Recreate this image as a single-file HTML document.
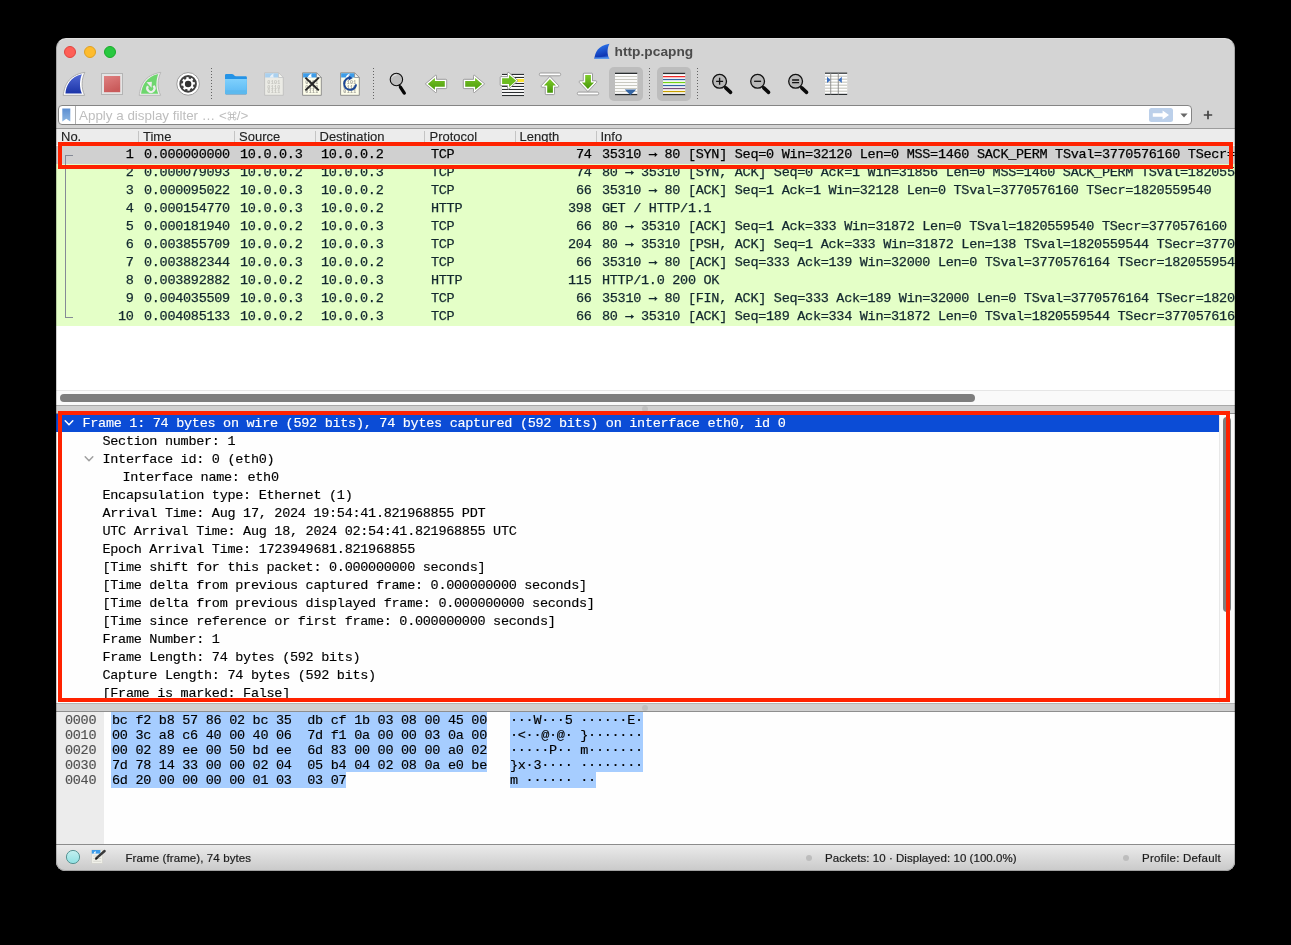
<!DOCTYPE html>
<html><head><meta charset="utf-8"><title>http.pcapng</title>
<style>
*{box-sizing:border-box;margin:0;padding:0}
html,body{width:1291px;height:945px;background:#000;overflow:hidden}
body{position:relative;font-family:"Liberation Sans",sans-serif;color:#000}
#win{will-change:transform;position:absolute;left:56px;top:38px;width:1179px;height:832.6px;background:#d4d4d4;border-radius:10px 10px 9px 9px;overflow:hidden}
.abs{position:absolute}
.mono{font-family:"Liberation Mono",monospace;font-size:13.5px;letter-spacing:-0.29px;white-space:pre;-webkit-text-stroke:0.15px}
.tl{position:absolute;top:8px;width:12px;height:12px;border-radius:50%}
#title{position:absolute;top:6.2px;left:558.5px;height:16px;font-weight:bold;font-size:13.7px;letter-spacing:0.04px;line-height:16px;color:#4b4b4b;white-space:nowrap}
.tbsep{position:absolute;top:30px;width:1px;height:31px;background:repeating-linear-gradient(#636363 0,#636363 1px,transparent 1px,transparent 3px)}
.tbact{position:absolute;top:29px;width:34px;height:34px;background:#bdbdbd;border-radius:5px}
.ic{position:absolute;top:33px;width:26px;height:26px}
#filter{position:absolute;left:2px;top:67px;width:1134px;height:20px;background:#fff;border:1px solid #858585;border-radius:4px}
#hdr{position:absolute;left:0;top:90px;width:1179px;height:18px;background:#ececec;border-top:1px solid #9c9c9c}
#hdr span{position:absolute;top:0;font-size:13px;line-height:16px;color:#222;-webkit-text-stroke:0.12px}
#hdr i{position:absolute;top:2px;width:1px;height:13px;background:#c4c4c4}
#plist{position:absolute;left:0;top:107px;width:1179px;height:245px;background:#fff;overflow:hidden}
.pr{position:absolute;left:0;width:1179px;height:18px;background:#e4ffc7;color:#12272e}
.pr span{position:absolute;top:-0.4px;line-height:18px;-webkit-text-stroke:0.25px}
.pr b{position:relative;top:-0.5px;font-weight:normal;-webkit-text-stroke:0.6px}
.pr.sel{background:#d0d0d0;color:#000}
#hsb{position:absolute;left:0;top:352px;width:1179px;height:15px;background:#fafafa;border-top:1px solid #e6e6e6}
#hsb div{position:absolute;left:4px;top:3px;width:915px;height:8px;border-radius:4px;background:#7e7e7e}
.split{position:absolute;left:0;width:1179px;background:#d0d0d0}
#det{position:absolute;left:0;top:375px;width:1179px;height:290px;background:#fefefe;overflow:hidden;border-top:1px solid #8e8e8e}
.dr{position:absolute;left:0;width:1163px;height:18px;line-height:18px}
.dr span{position:absolute;top:0.6px}
.dr.sel{background:#0b4cd6;color:#fff}
#vsb{position:absolute;left:1163px;top:0;width:16px;height:289px;background:#fafafa;border-left:1px solid #e8e8e8}
#vsb div{position:absolute;left:3px;top:3px;width:7.5px;height:195px;border-radius:4px;background:#7e7e7e}
#bytes{position:absolute;left:0;top:674px;width:1179px;height:132px;background:#fefefe;overflow:hidden}
#boff{position:absolute;left:0;top:0;width:48px;height:132px;background:#ececec}
.br{position:absolute;left:0;height:15px;line-height:18px}
.br span{position:absolute;top:0;height:15px}
.hl{background:#a6cdff}
#status{position:absolute;left:0;top:806px;width:1179px;height:27px;border-top:1px solid #8c8c8c;background:linear-gradient(#ebebeb,#c9c9c9);font-size:11.5px;color:#1c1c1c}
#status span{-webkit-text-stroke:0.2px;position:absolute;top:6.2px;line-height:15px;white-space:nowrap}
.redbox{position:absolute;border:4px solid #ff2200;pointer-events:none}
</style></head><body>
<div id="win">

<div class="tl" style="left:8px;background:#fe5f57;border:0.5px solid #e0443e"></div>
<div class="tl" style="left:28px;background:#febc2e;border:0.5px solid #dea123"></div>
<div class="tl" style="left:48px;background:#28c840;border:0.5px solid #1aab29"></div>
<svg class="abs" style="left:538px;top:5px" width="16" height="16" viewBox="0 0 16 16" ><g transform="translate(-1.2,-0.2) scale(0.70,0.655)"><path d="M2.2,24.3 C3.5,15 7,4 23.8,1.4 C20.5,8 20,17 23.6,24.3 Z" fill="url(#gFinT)"/><path d="M2.2,24.3 L23.6,24.3 L23.0,22.4 L2.6,22.4 Z" fill="#5e9ff0"/></g></svg>
<div id="title">http.pcapng</div>
<svg width="0" height="0" style="position:absolute"><defs>
<linearGradient id="gBlue" x1="0" y1="0" x2="0" y2="1"><stop offset="0" stop-color="#5068d4"/><stop offset="1" stop-color="#1b34a8"/></linearGradient>
<linearGradient id="gFinT" x1="0.2" y1="0" x2="0.5" y2="1"><stop offset="0" stop-color="#2e7cf2"/><stop offset="0.85" stop-color="#0f36b4"/><stop offset="1" stop-color="#2c66d8"/></linearGradient>
<linearGradient id="gRed" x1="0" y1="0" x2="0.4" y2="1"><stop offset="0" stop-color="#df8080"/><stop offset="1" stop-color="#c95a5a"/></linearGradient>
<linearGradient id="gGrn" x1="0" y1="0" x2="0" y2="1"><stop offset="0" stop-color="#7fcc2a"/><stop offset="1" stop-color="#46960a"/></linearGradient>
<linearGradient id="gGrnH" x1="0" y1="0" x2="0" y2="1"><stop offset="0" stop-color="#74c024"/><stop offset="1" stop-color="#4c9c0c"/></linearGradient>
<linearGradient id="gFold" x1="0" y1="0" x2="0" y2="1"><stop offset="0" stop-color="#7fd0fc"/><stop offset="1" stop-color="#5ab8f4"/></linearGradient>
<linearGradient id="gBm" x1="0" y1="0" x2="0" y2="1"><stop offset="0" stop-color="#5b8ed2"/><stop offset="1" stop-color="#8cb6e2"/></linearGradient>
<linearGradient id="gCy" x1="0" y1="0" x2="0" y2="1"><stop offset="0" stop-color="#c4f0f0"/><stop offset="1" stop-color="#8fe0e2"/></linearGradient>
</defs></svg><div class="tbact" style="left:553px"></div><div class="tbact" style="left:601px"></div><div class="tbsep" style="left:155px"></div><div class="tbsep" style="left:317px"></div><div class="tbsep" style="left:593px"></div><div class="tbsep" style="left:641px"></div><svg class="abs" style="left:5px;top:33px" width="26" height="26" viewBox="0 0 26 26" ><path d="M2.2,24.3 C3.5,15 7,4 23.8,1.4 C20.5,8 20,17 23.6,24.3 Z" fill="#fff" stroke="#a4a4a4" stroke-width="0.9" stroke-linejoin="round"/><path d="M4.4,22.5 C5.2,14.5 9,6.2 20.9,3.3 C18.6,9 18.2,16.5 20.9,22.5 Z" fill="url(#gBlue)"/></svg><svg class="abs" style="left:43px;top:33px" width="26" height="26" viewBox="0 0 26 26" ><rect x="2.5" y="2.5" width="21" height="21" fill="#e4e4e4" stroke="#b4b4b4" stroke-width="1"/><rect x="5" y="5" width="16.2" height="16.2" fill="url(#gRed)"/></svg><svg class="abs" style="left:81px;top:33px" width="26" height="26" viewBox="0 0 26 26" ><path d="M2.2,24.3 C3.5,15 7,4 23.8,1.4 C20.5,8 20,17 23.6,24.3 Z" fill="#f0f0f0" stroke="#b2b2b2" stroke-width="0.9" stroke-linejoin="round"/><path d="M4.1,22.8 C5,14.5 8.8,5.8 21.3,2.9 C19,9 18.6,16.5 21.3,22.8 Z" fill="#6ed66e"/><path d="M16.45,14.75 A3.6,3.6 0 1 1 10.95,15.24" fill="none" stroke="#ececec" stroke-width="2.2"/><path d="M9.5,11.3 L14.9,10.65 L14.56,16.7 Z" fill="#ececec"/></svg><svg class="abs" style="left:119px;top:33px" width="26" height="26" viewBox="0 0 26 26" ><circle cx="13.1" cy="12.9" r="11.3" fill="#fff" stroke="#949494" stroke-width="0.9"/><circle cx="13.1" cy="12.9" r="8.8" fill="#414141"/><circle cx="13.1" cy="12.9" r="5.3" fill="#fff"/><rect x="4.4" y="-1.2" width="2.4" height="2.4" rx="0.4" fill="#fff" transform="translate(13.1,12.9) rotate(-6)"/><rect x="4.4" y="-1.2" width="2.4" height="2.4" rx="0.4" fill="#fff" transform="translate(13.1,12.9) rotate(39)"/><rect x="4.4" y="-1.2" width="2.4" height="2.4" rx="0.4" fill="#fff" transform="translate(13.1,12.9) rotate(84)"/><rect x="4.4" y="-1.2" width="2.4" height="2.4" rx="0.4" fill="#fff" transform="translate(13.1,12.9) rotate(129)"/><rect x="4.4" y="-1.2" width="2.4" height="2.4" rx="0.4" fill="#fff" transform="translate(13.1,12.9) rotate(174)"/><rect x="4.4" y="-1.2" width="2.4" height="2.4" rx="0.4" fill="#fff" transform="translate(13.1,12.9) rotate(219)"/><rect x="4.4" y="-1.2" width="2.4" height="2.4" rx="0.4" fill="#fff" transform="translate(13.1,12.9) rotate(264)"/><rect x="4.4" y="-1.2" width="2.4" height="2.4" rx="0.4" fill="#fff" transform="translate(13.1,12.9) rotate(309)"/><circle cx="13.1" cy="12.9" r="3.25" fill="#333"/></svg><svg class="abs" style="left:167px;top:33px" width="26" height="26" viewBox="0 0 26 26" ><path d="M2,4.2 Q2,3 3.2,3 L9,3 Q9.8,3 10.4,3.6 L11.6,4.8 Q12,5.2 12.8,5.2 L22.7,5.2 Q23.9,5.2 23.9,6.4 L23.9,22 Q23.9,23.2 22.7,23.2 L3.2,23.2 Q2,23.2 2,22 Z" fill="#2493e6"/><path d="M2,8 L23.9,8 L23.9,22 Q23.9,23.2 22.7,23.2 L3.2,23.2 Q2,23.2 2,22 Z" fill="url(#gFold)"/><path d="M2,19.2 L23.9,19.2 L23.9,22 Q23.9,23.2 22.7,23.2 L3.2,23.2 Q2,23.2 2,22 Z" fill="#5cb9ee"/><rect x="2.6" y="23.2" width="20.8" height="0.6" fill="#9a9a9a" opacity="0.5"/></svg><svg class="abs" style="left:205px;top:33px" width="26" height="26" viewBox="0 0 26 26" ><path d="M3.6,1.8 L17.6,1.8 L22.3,6.5 L22.3,24.3 L3.6,24.3 Z" fill="#ebebe5" stroke="#c0c0c0" stroke-width="0.9"/><path d="M4.1,2.3 L17.4,2.3 L21.8,6.4 L4.1,6.4 Z" fill="#a9d0ef"/><path d="M8.6,6.4 C9.4,4.6 10.6,3.3 12.8,2.5 C12.1,3.9 12.1,5.2 12.9,6.4 Z" fill="#e6f0f8"/><path d="M17.6,1.8 L17.6,6.5 L22.3,6.5 Z" fill="#f6f6f0" stroke="#c0c0c0" stroke-width="0.7" stroke-linejoin="round"/><text x="13" y="13.4" font-family="Liberation Mono,monospace" font-size="5" font-weight="bold" text-anchor="middle" fill="#c4c4be" letter-spacing="0.35">0101</text><text x="13" y="17.8" font-family="Liberation Mono,monospace" font-size="5" font-weight="bold" text-anchor="middle" fill="#c4c4be" letter-spacing="0.35">0110</text><text x="13" y="22.2" font-family="Liberation Mono,monospace" font-size="5" font-weight="bold" text-anchor="middle" fill="#c4c4be" letter-spacing="0.35">0111</text></svg><svg class="abs" style="left:243px;top:33px" width="26" height="26" viewBox="0 0 26 26" ><path d="M3.6,1.8 L17.6,1.8 L22.3,6.5 L22.3,24.3 L3.6,24.3 Z" fill="#fdfdea" stroke="#868686" stroke-width="0.9"/><path d="M4.1,2.3 L17.4,2.3 L21.8,6.4 L4.1,6.4 Z" fill="#3d9ce9"/><path d="M8.6,6.4 C9.4,4.6 10.6,3.3 12.8,2.5 C12.1,3.9 12.1,5.2 12.9,6.4 Z" fill="#ffffff"/><path d="M17.6,1.8 L17.6,6.5 L22.3,6.5 Z" fill="#f6f6f0" stroke="#868686" stroke-width="0.7" stroke-linejoin="round"/><text x="13" y="13.4" font-family="Liberation Mono,monospace" font-size="5" font-weight="bold" text-anchor="middle" fill="#a2a29a" letter-spacing="0.35">0101</text><text x="13" y="17.8" font-family="Liberation Mono,monospace" font-size="5" font-weight="bold" text-anchor="middle" fill="#a2a29a" letter-spacing="0.35">0110</text><text x="13" y="22.2" font-family="Liberation Mono,monospace" font-size="5" font-weight="bold" text-anchor="middle" fill="#a2a29a" letter-spacing="0.35">0111</text><path d="M6.4,6.6 L19.8,19.4 M19.8,6.6 L6.4,19.4" stroke="#262626" stroke-width="2" stroke-linecap="butt"/></svg><svg class="abs" style="left:281px;top:33px" width="26" height="26" viewBox="0 0 26 26" ><path d="M3.6,1.8 L17.6,1.8 L22.3,6.5 L22.3,24.3 L3.6,24.3 Z" fill="#fdfdea" stroke="#868686" stroke-width="0.9"/><path d="M4.1,2.3 L17.4,2.3 L21.8,6.4 L4.1,6.4 Z" fill="#3d9ce9"/><path d="M8.6,6.4 C9.4,4.6 10.6,3.3 12.8,2.5 C12.1,3.9 12.1,5.2 12.9,6.4 Z" fill="#ffffff"/><path d="M17.6,1.8 L17.6,6.5 L22.3,6.5 Z" fill="#f6f6f0" stroke="#868686" stroke-width="0.7" stroke-linejoin="round"/><text x="13" y="13.4" font-family="Liberation Mono,monospace" font-size="5" font-weight="bold" text-anchor="middle" fill="#a2a29a" letter-spacing="0.35">0101</text><text x="13" y="17.8" font-family="Liberation Mono,monospace" font-size="5" font-weight="bold" text-anchor="middle" fill="#a2a29a" letter-spacing="0.35">0110</text><text x="13" y="22.2" font-family="Liberation Mono,monospace" font-size="5" font-weight="bold" text-anchor="middle" fill="#a2a29a" letter-spacing="0.35">0111</text><path d="M19.1,13.4 A6,6 0 1 1 13.1,6.8" fill="none" stroke="#1b4797" stroke-width="2"/><path d="M11.6,4.4 L15.8,6.9 L11.6,9.4 Z" fill="#1b4797"/></svg><svg class="abs" style="left:328px;top:33px" width="26" height="26" viewBox="0 0 26 26" ><circle cx="12.4" cy="8.5" r="6.2" fill="#bdbdbd" stroke="#0c0c0c" stroke-width="1.1"/><path d="M8,6.6 A4.8,4.8 0 0 1 12.6,3.8" fill="none" stroke="#ececec" stroke-width="0.9"/><path d="M16.4,16.2 L20.3,22.1" stroke="#050505" stroke-width="3.3" stroke-linecap="round"/><path d="M15,13.6 L16.6,16.2" stroke="#0c0c0c" stroke-width="1.8"/></svg><svg class="abs" style="left:367px;top:33px" width="26" height="26" viewBox="0 0 26 26" ><g><path d="M2.3,12.9 L12.5,4.3 Q13.5,3.8 13.5,5.2 L13.5,8.3 L22.9,8.3 Q23.7,8.3 23.7,9.1 L23.7,16.8 Q23.7,17.6 22.9,17.6 L13.5,17.6 L13.5,20.6 Q13.5,22 12.5,21.5 Z" fill="#fff" stroke="#939393" stroke-width="0.9" stroke-linejoin="round"/><polygon points="4.8,12.9 11.9,7.1 11.9,10 21.8,10 21.8,15.7 11.9,15.7 11.9,18.8" fill="url(#gGrnH)"/></g></svg><svg class="abs" style="left:405px;top:33px" width="26" height="26" viewBox="0 0 26 26" ><g transform="translate(26,0) scale(-1,1)"><path d="M2.3,12.9 L12.5,4.3 Q13.5,3.8 13.5,5.2 L13.5,8.3 L22.9,8.3 Q23.7,8.3 23.7,9.1 L23.7,16.8 Q23.7,17.6 22.9,17.6 L13.5,17.6 L13.5,20.6 Q13.5,22 12.5,21.5 Z" fill="#fff" stroke="#939393" stroke-width="0.9" stroke-linejoin="round"/><polygon points="4.8,12.9 11.9,7.1 11.9,10 21.8,10 21.8,15.7 11.9,15.7 11.9,18.8" fill="url(#gGrnH)"/></g></svg><svg class="abs" style="left:443px;top:33px" width="26" height="26" viewBox="0 0 26 26" ><rect x="3" y="3" width="22" height="22" fill="#fff"/><rect x="3" y="2.9" width="22" height="1.1" fill="#2a2e30"/><rect x="3" y="5.9" width="22" height="1.1" fill="#2a2e30"/><rect x="3" y="11.95" width="22" height="1.1" fill="#2a2e30"/><rect x="3" y="14.9" width="22" height="1.1" fill="#2a2e30"/><rect x="3" y="17.95" width="22" height="1.1" fill="#2a2e30"/><rect x="3" y="20.95" width="22" height="1.1" fill="#2a2e30"/><rect x="3" y="23.95" width="22" height="1.1" fill="#2a2e30"/><rect x="17" y="7.95" width="8" height="3" fill="#fbe132"/><path d="M1.2,6.4 Q1.2,5.6 2,5.6 L8.5,5.6 L8.5,2.2 Q8.6,0.8 9.9,1.5 L18.9,9.7 L9.9,17.9 Q8.6,18.6 8.5,17.2 L8.5,14.6 L2,14.6 Q1.2,14.6 1.2,13.8 Z" fill="#fff" stroke="#939393" stroke-width="0.9" stroke-linejoin="round"/><polygon points="3.1,7.2 9.9,7.2 10.2,3.9 17.2,9.7 10.2,16 9.9,12.9 3.1,12.9" fill="#6cbc20"/></svg><svg class="abs" style="left:481px;top:33px" width="26" height="26" viewBox="0 0 26 26" ><rect x="2.3" y="2" width="21.4" height="2.8" rx="1.4" fill="#fff" stroke="#939393" stroke-width="0.9"/><path d="M12.9,5.4 L21.6,14.6 Q22.2,15.6 21,16.2 L17.5,16.2 L17.5,22.8 Q17.5,23.6 16.7,23.6 L9.1,23.6 Q8.3,23.6 8.3,22.8 L8.3,16.2 L4.9,16.2 Q3.7,15.6 4.3,14.6 Z" fill="#fff" stroke="#939393" stroke-width="0.9" stroke-linejoin="round"/><polygon points="12.9,7.9 18.9,14.6 15.9,14.6 15.9,21.7 10.2,21.7 10.2,14.6 6.95,14.6" fill="url(#gGrn)"/></svg><svg class="abs" style="left:519px;top:33px" width="26" height="26" viewBox="0 0 26 26" ><path d="M9.1,2.2 L16.7,2.2 Q17.5,2.2 17.5,3 L17.5,9.8 L21,9.8 Q22.2,10.4 21.6,11.4 L12.9,20.6 L4.3,11.4 Q3.7,10.4 4.9,9.8 L8.3,9.8 L8.3,3 Q8.3,2.2 9.1,2.2 Z" fill="#fff" stroke="#939393" stroke-width="0.9" stroke-linejoin="round"/><polygon points="10.2,4.1 15.9,4.1 15.9,11.4 19.1,11.4 12.9,17.9 6.9,11.4 10.2,11.4" fill="url(#gGrn)"/><rect x="2.3" y="21.1" width="21.4" height="2.8" rx="1.4" fill="#fff" stroke="#939393" stroke-width="0.9"/></svg><svg class="abs" style="left:557px;top:33px" width="26" height="26" viewBox="0 0 26 26" ><rect x="2" y="2" width="22.3" height="22" fill="#fff"/><rect x="2" y="4.9" width="22.3" height="1.2" fill="#c9c9c1"/><rect x="2" y="7.9" width="22.3" height="1.2" fill="#c9c9c1"/><rect x="2" y="10.9" width="22.3" height="1.2" fill="#c9c9c1"/><rect x="2" y="13.9" width="22.3" height="1.2" fill="#c9c9c1"/><rect x="2" y="16.9" width="22.3" height="1.2" fill="#c9c9c1"/><rect x="2" y="19.9" width="22.3" height="1.2" fill="#c9c9c1"/><rect x="2" y="1.7" width="22.3" height="1.3" fill="#2a2e30"/><rect x="2" y="22.9" width="22.3" height="1.3" fill="#2a2e30"/><path d="M11.8,18.4 L23.2,18.4 Q21,21 17.5,24 Q14,21 11.8,18.4 Z" fill="#3465a4"/></svg><svg class="abs" style="left:605px;top:33px" width="26" height="26" viewBox="0 0 26 26" ><rect x="2" y="2" width="22.2" height="22" fill="#fff"/><rect x="2" y="1.7999999999999998" width="22.2" height="1.3" fill="#2a2e30"/><rect x="2" y="5.0" width="22.2" height="1.3" fill="#ee2a2a"/><rect x="2" y="7.9" width="22.2" height="1.3" fill="#3465a4"/><rect x="2" y="10.9" width="22.2" height="1.3" fill="#73d216"/><rect x="2" y="13.9" width="22.2" height="1.3" fill="#3465a4"/><rect x="2" y="16.9" width="22.2" height="1.3" fill="#75507b"/><rect x="2" y="19.9" width="22.2" height="1.3" fill="#c8a000"/><rect x="2" y="22.9" width="22.2" height="1.3" fill="#2a2e30"/></svg><svg class="abs" style="left:653px;top:33px" width="26" height="26" viewBox="0 0 26 26" ><circle cx="10.6" cy="10.3" r="6.9" fill="#b9b9b9" stroke="#111" stroke-width="1.3"/><path d="M16.8,16.9 L21.6,21.4" stroke="#0a0a0a" stroke-width="3.5" stroke-linecap="round"/><path d="M15.2,15.2 L17,17" stroke="#111" stroke-width="1.8"/><path d="M7.1,10.3 L14.1,10.3 M10.6,6.8 L10.6,13.8" stroke="#111" stroke-width="1.3"/></svg><svg class="abs" style="left:691px;top:33px" width="26" height="26" viewBox="0 0 26 26" ><circle cx="10.6" cy="10.3" r="6.9" fill="#b9b9b9" stroke="#111" stroke-width="1.3"/><path d="M16.8,16.9 L21.6,21.4" stroke="#0a0a0a" stroke-width="3.5" stroke-linecap="round"/><path d="M15.2,15.2 L17,17" stroke="#111" stroke-width="1.8"/><path d="M7.1,10.3 L14.1,10.3" stroke="#111" stroke-width="1.3"/></svg><svg class="abs" style="left:729px;top:33px" width="26" height="26" viewBox="0 0 26 26" ><circle cx="10.6" cy="10.3" r="6.9" fill="#b9b9b9" stroke="#111" stroke-width="1.3"/><path d="M16.8,16.9 L21.6,21.4" stroke="#0a0a0a" stroke-width="3.5" stroke-linecap="round"/><path d="M15.2,15.2 L17,17" stroke="#111" stroke-width="1.8"/><path d="M7.1,9 L14.1,9 M7.1,11.6 L14.1,11.6" stroke="#111" stroke-width="1.3"/></svg><svg class="abs" style="left:767px;top:33px" width="26" height="26" viewBox="0 0 26 26" ><rect x="2" y="2" width="22.2" height="21.6" fill="#fff"/><rect x="2" y="4.6000000000000005" width="22.2" height="1.2" fill="#c9c9c1"/><rect x="2" y="7.6" width="22.2" height="1.2" fill="#c9c9c1"/><rect x="2" y="10.6" width="22.2" height="1.2" fill="#c9c9c1"/><rect x="2" y="13.6" width="22.2" height="1.2" fill="#c9c9c1"/><rect x="2" y="16.599999999999998" width="22.2" height="1.2" fill="#c9c9c1"/><rect x="2" y="19.599999999999998" width="22.2" height="1.2" fill="#c9c9c1"/><rect x="2" y="1.6" width="22.2" height="1.2" fill="#2a2e30"/><rect x="2" y="22.8" width="22.2" height="1.2" fill="#2a2e30"/><rect x="7.3" y="2" width="0.9" height="21.6" fill="#888"/><rect x="14.8" y="2" width="0.9" height="21.6" fill="#888"/><polygon points="4,5.8 7.6,8.9 4,12" fill="#3a6fc0"/><polygon points="18.8,5.8 15.2,8.9 18.8,12" fill="#3a6fc0"/></svg>
<div id="filter"><svg class="abs" style="left:3px;top:2px" width="9" height="14" viewBox="0 0 9 14"><path d="M0.3,0.5 L8.3,0.5 L8.3,13.6 L4.3,10.8 L0.3,13.6 Z" fill="url(#gBm)"/></svg><div class="abs" style="left:16px;top:0;width:1px;height:18px;background:#b0b0b0"></div><div class="abs" style="left:20px;top:1.4px;height:18px;line-height:18px;font-size:13.4px;color:#bebebe;white-space:nowrap">Apply a display filter … &lt;<svg width="10" height="10" viewBox="0 0 10 10" style="vertical-align:-1px;margin:0 0"><path d="M3.5,3.5 V2.25 A1.25,1.25 0 1 0 2.25,3.5 H7.75 A1.25,1.25 0 1 0 6.5,2.25 V7.75 A1.25,1.25 0 1 0 7.75,6.5 H2.25 A1.25,1.25 0 1 0 3.5,7.75 Z" fill="none" stroke="#bebebe" stroke-width="0.95"/></svg>/&gt;</div><div class="abs" style="left:1090px;top:2px;width:24px;height:14px;border-radius:2.5px;background:#bcd0ea"></div><svg class="abs" style="left:1093px;top:4px" width="18" height="10" viewBox="0 0 18 10"><path d="M0.8,3.2 L10.6,3.2 L10.6,0.6 L17,5 L10.6,9.4 L10.6,6.8 L0.8,6.8 Z" fill="#fff"/></svg><svg class="abs" style="left:1121px;top:6.6px" width="8" height="5" viewBox="0 0 8 5"><path d="M0.4,0.4 L7.6,0.4 L4,4.6 Z" fill="#686868"/></svg></div>
<svg class="abs" style="left:1147px;top:72px" width="10" height="10" viewBox="0 0 10 10" ><path d="M0.8,5 L9.2,5 M5,0.8 L5,9.2" stroke="#444" stroke-width="1.7"/></svg>
<div id="hdr">
<span style="left:5px">No.</span>
<span style="left:87px">Time</span>
<span style="left:183px">Source</span>
<span style="left:263.5px">Destination</span>
<span style="left:373.5px">Protocol</span>
<span style="left:463.5px">Length</span>
<span style="left:544.5px">Info</span>
<i style="left:82px"></i>
<i style="left:178px"></i>
<i style="left:259px"></i>
<i style="left:368px"></i>
<i style="left:459px"></i>
<i style="left:540px"></i>
</div>
<div id="plist">
<div class="pr mono sel" style="top:1px"><span style="left:0;width:77.5px;text-align:right">1</span><span style="left:88px">0.000000000</span><span style="left:184px">10.0.0.3</span><span style="left:265px">10.0.0.2</span><span style="left:375px">TCP</span><span style="left:460px;width:75.5px;text-align:right">74</span><span style="left:546px">35310 <b>→</b> 80 [SYN] Seq=0 Win=32120 Len=0 MSS=1460 SACK_PERM TSval=3770576160 TSecr=0 WS=128</span></div>
<div class="pr mono" style="top:19px"><span style="left:0;width:77.5px;text-align:right">2</span><span style="left:88px">0.000079093</span><span style="left:184px">10.0.0.2</span><span style="left:265px">10.0.0.3</span><span style="left:375px">TCP</span><span style="left:460px;width:75.5px;text-align:right">74</span><span style="left:546px">80 <b>→</b> 35310 [SYN, ACK] Seq=0 Ack=1 Win=31856 Len=0 MSS=1460 SACK_PERM TSval=1820559540 TSecr=3770576160 WS=128</span></div>
<div class="pr mono" style="top:37px"><span style="left:0;width:77.5px;text-align:right">3</span><span style="left:88px">0.000095022</span><span style="left:184px">10.0.0.3</span><span style="left:265px">10.0.0.2</span><span style="left:375px">TCP</span><span style="left:460px;width:75.5px;text-align:right">66</span><span style="left:546px">35310 <b>→</b> 80 [ACK] Seq=1 Ack=1 Win=32128 Len=0 TSval=3770576160 TSecr=1820559540</span></div>
<div class="pr mono" style="top:55px"><span style="left:0;width:77.5px;text-align:right">4</span><span style="left:88px">0.000154770</span><span style="left:184px">10.0.0.3</span><span style="left:265px">10.0.0.2</span><span style="left:375px">HTTP</span><span style="left:460px;width:75.5px;text-align:right">398</span><span style="left:546px">GET / HTTP/1.1 </span></div>
<div class="pr mono" style="top:73px"><span style="left:0;width:77.5px;text-align:right">5</span><span style="left:88px">0.000181940</span><span style="left:184px">10.0.0.2</span><span style="left:265px">10.0.0.3</span><span style="left:375px">TCP</span><span style="left:460px;width:75.5px;text-align:right">66</span><span style="left:546px">80 <b>→</b> 35310 [ACK] Seq=1 Ack=333 Win=31872 Len=0 TSval=1820559540 TSecr=3770576160</span></div>
<div class="pr mono" style="top:91px"><span style="left:0;width:77.5px;text-align:right">6</span><span style="left:88px">0.003855709</span><span style="left:184px">10.0.0.2</span><span style="left:265px">10.0.0.3</span><span style="left:375px">TCP</span><span style="left:460px;width:75.5px;text-align:right">204</span><span style="left:546px">80 <b>→</b> 35310 [PSH, ACK] Seq=1 Ack=333 Win=31872 Len=138 TSval=1820559544 TSecr=3770576160</span></div>
<div class="pr mono" style="top:109px"><span style="left:0;width:77.5px;text-align:right">7</span><span style="left:88px">0.003882344</span><span style="left:184px">10.0.0.3</span><span style="left:265px">10.0.0.2</span><span style="left:375px">TCP</span><span style="left:460px;width:75.5px;text-align:right">66</span><span style="left:546px">35310 <b>→</b> 80 [ACK] Seq=333 Ack=139 Win=32000 Len=0 TSval=3770576164 TSecr=1820559544</span></div>
<div class="pr mono" style="top:127px"><span style="left:0;width:77.5px;text-align:right">8</span><span style="left:88px">0.003892882</span><span style="left:184px">10.0.0.2</span><span style="left:265px">10.0.0.3</span><span style="left:375px">HTTP</span><span style="left:460px;width:75.5px;text-align:right">115</span><span style="left:546px">HTTP/1.0 200 OK </span></div>
<div class="pr mono" style="top:145px"><span style="left:0;width:77.5px;text-align:right">9</span><span style="left:88px">0.004035509</span><span style="left:184px">10.0.0.3</span><span style="left:265px">10.0.0.2</span><span style="left:375px">TCP</span><span style="left:460px;width:75.5px;text-align:right">66</span><span style="left:546px">35310 <b>→</b> 80 [FIN, ACK] Seq=333 Ack=189 Win=32000 Len=0 TSval=3770576164 TSecr=1820559544</span></div>
<div class="pr mono" style="top:163px"><span style="left:0;width:77.5px;text-align:right">10</span><span style="left:88px">0.004085133</span><span style="left:184px">10.0.0.2</span><span style="left:265px">10.0.0.3</span><span style="left:375px">TCP</span><span style="left:460px;width:75.5px;text-align:right">66</span><span style="left:546px">80 <b>→</b> 35310 [ACK] Seq=189 Ack=334 Win=31872 Len=0 TSval=1820559544 TSecr=3770576164</span></div>
<div class="abs" style="left:9.2px;top:10px;width:8px;height:1px;background:#858a96"></div>
<div class="abs" style="left:9.2px;top:10px;width:1px;height:163px;background:#858a96"></div>
<div class="abs" style="left:9.2px;top:172px;width:8px;height:1px;background:#858a96"></div>
</div>
<div id="hsb"><div></div></div>
<div class="split" style="top:367px;height:8px;border-top:1px solid #a8a8a8"><div class="abs" style="left:586px;top:0.4px;width:6px;height:6px;border-radius:50%;background:#bfbfbf"></div></div>
<div id="det">
<div class="dr mono sel" style="top:0px"><svg class="abs" style="left:8.0px;top:5px" width="10" height="8" viewBox="0 0 10 8"><path d="M1.2 1.8 L5 5.8 L8.8 1.8" fill="none" stroke="#fff" stroke-width="1.5" stroke-linecap="round" stroke-linejoin="round"/></svg><span style="left:26.5px">Frame 1: 74 bytes on wire (592 bits), 74 bytes captured (592 bits) on interface eth0, id 0</span></div>
<div class="dr mono" style="top:18px"><span style="left:46.5px">Section number: 1</span></div>
<div class="dr mono" style="top:36px"><svg class="abs" style="left:28.0px;top:5px" width="10" height="8" viewBox="0 0 10 8"><path d="M1.2 1.8 L5 5.8 L8.8 1.8" fill="none" stroke="#a0a0a0" stroke-width="1.5" stroke-linecap="round" stroke-linejoin="round"/></svg><span style="left:46.5px">Interface id: 0 (eth0)</span></div>
<div class="dr mono" style="top:54px"><span style="left:66.5px">Interface name: eth0</span></div>
<div class="dr mono" style="top:72px"><span style="left:46.5px">Encapsulation type: Ethernet (1)</span></div>
<div class="dr mono" style="top:90px"><span style="left:46.5px">Arrival Time: Aug 17, 2024 19:54:41.821968855 PDT</span></div>
<div class="dr mono" style="top:108px"><span style="left:46.5px">UTC Arrival Time: Aug 18, 2024 02:54:41.821968855 UTC</span></div>
<div class="dr mono" style="top:126px"><span style="left:46.5px">Epoch Arrival Time: 1723949681.821968855</span></div>
<div class="dr mono" style="top:144px"><span style="left:46.5px">[Time shift for this packet: 0.000000000 seconds]</span></div>
<div class="dr mono" style="top:162px"><span style="left:46.5px">[Time delta from previous captured frame: 0.000000000 seconds]</span></div>
<div class="dr mono" style="top:180px"><span style="left:46.5px">[Time delta from previous displayed frame: 0.000000000 seconds]</span></div>
<div class="dr mono" style="top:198px"><span style="left:46.5px">[Time since reference or first frame: 0.000000000 seconds]</span></div>
<div class="dr mono" style="top:216px"><span style="left:46.5px">Frame Number: 1</span></div>
<div class="dr mono" style="top:234px"><span style="left:46.5px">Frame Length: 74 bytes (592 bits)</span></div>
<div class="dr mono" style="top:252px"><span style="left:46.5px">Capture Length: 74 bytes (592 bits)</span></div>
<div class="dr mono" style="top:270px"><span style="left:46.5px">[Frame is marked: False]</span></div>
<div id="vsb"><div></div></div>
</div>
<div class="split" style="top:665px;height:9px;border-top:1px solid #b4b4b4;border-bottom:1px solid #8e8e8e"><div class="abs" style="left:586px;top:1.3px;width:6px;height:6px;border-radius:50%;background:#bfbfbf"></div></div>
<div id="bytes"><div id="boff"></div>
<div class="br mono" style="top:0px"><span style="left:9px;color:#505050">0000</span><span class="hl" style="left:55px;padding-left:1px">bc f2 b8 57 86 02 bc 35  db cf 1b 03 08 00 45 00</span><span class="hl" style="left:454px">···W···5 ······E·</span></div>
<div class="br mono" style="top:15px"><span style="left:9px;color:#505050">0010</span><span class="hl" style="left:55px;padding-left:1px">00 3c a8 c6 40 00 40 06  7d f1 0a 00 00 03 0a 00</span><span class="hl" style="left:454px">·&lt;··@·@· }·······</span></div>
<div class="br mono" style="top:30px"><span style="left:9px;color:#505050">0020</span><span class="hl" style="left:55px;padding-left:1px">00 02 89 ee 00 50 bd ee  6d 83 00 00 00 00 a0 02</span><span class="hl" style="left:454px">·····P·· m·······</span></div>
<div class="br mono" style="top:45px"><span style="left:9px;color:#505050">0030</span><span class="hl" style="left:55px;padding-left:1px">7d 78 14 33 00 00 02 04  05 b4 04 02 08 0a e0 be</span><span class="hl" style="left:454px">}x·3···· ········</span></div>
<div class="br mono" style="top:60px"><span style="left:9px;color:#505050">0040</span><span class="hl" style="left:55px;padding-left:1px;height:15.6px">6d 20 00 00 00 00 01 03  03 07</span><span class="hl" style="left:454px;height:15.6px">m ······ ··</span></div>
</div>
<div id="status"><svg class="abs" style="left:9px;top:4px" width="16" height="16" viewBox="0 0 16 16"><circle cx="8" cy="8" r="6.6" fill="url(#gCy)" stroke="#4d8a8a" stroke-width="0.9"/></svg><svg class="abs" style="left:35px;top:4px" width="16" height="16" viewBox="0 0 16 16"><rect x="0.8" y="1" width="10.8" height="13.4" fill="#f1f1ea" stroke="#cfcfc8" stroke-width="0.6"/><rect x="0.8" y="1" width="8.6" height="3.6" fill="#3d9ce9"/><path d="M2.6,4.6 C3,3.4 3.6,2.6 4.8,2 C4.5,3 4.5,3.8 4.9,4.6 Z" fill="#fff"/><rect x="2.2" y="6.6" width="8" height="0.8" fill="#d0d0c8"/><rect x="2.2" y="9.2" width="8" height="0.8" fill="#d0d0c8"/><rect x="2.2" y="11.8" width="8" height="0.8" fill="#d0d0c8"/><path d="M13.6,2 L5.2,9.4" stroke="#3a3a3a" stroke-width="2.4" stroke-linecap="round"/><path d="M5.9,8.6 L3.9,10.8 L6.6,9.9 Z" fill="#111"/></svg><span style="left:69.5px;letter-spacing:0.1px">Frame (frame), 74 bytes</span><span style="left:769px;letter-spacing:0.05px">Packets: 10 · Displayed: 10 (100.0%)</span><span style="left:1086px;letter-spacing:0.22px">Profile: Default</span><div class="abs" style="left:750px;top:10px;width:6px;height:6px;border-radius:50%;background:#bdbdbd"></div><div class="abs" style="left:1067px;top:10px;width:6px;height:6px;border-radius:50%;background:#bdbdbd"></div></div>
<div class="abs" style="left:0;top:0;right:0;bottom:0;border-radius:10px 10px 9px 9px;border:1px solid rgba(0,0,0,0.2);border-top-color:rgba(255,255,255,0.25)"></div>
</div>
<div class="redbox" style="left:58px;top:142px;width:1175px;height:27px"></div>
<div class="redbox" style="left:58px;top:411px;width:1172px;height:291px"></div>
</body></html>
